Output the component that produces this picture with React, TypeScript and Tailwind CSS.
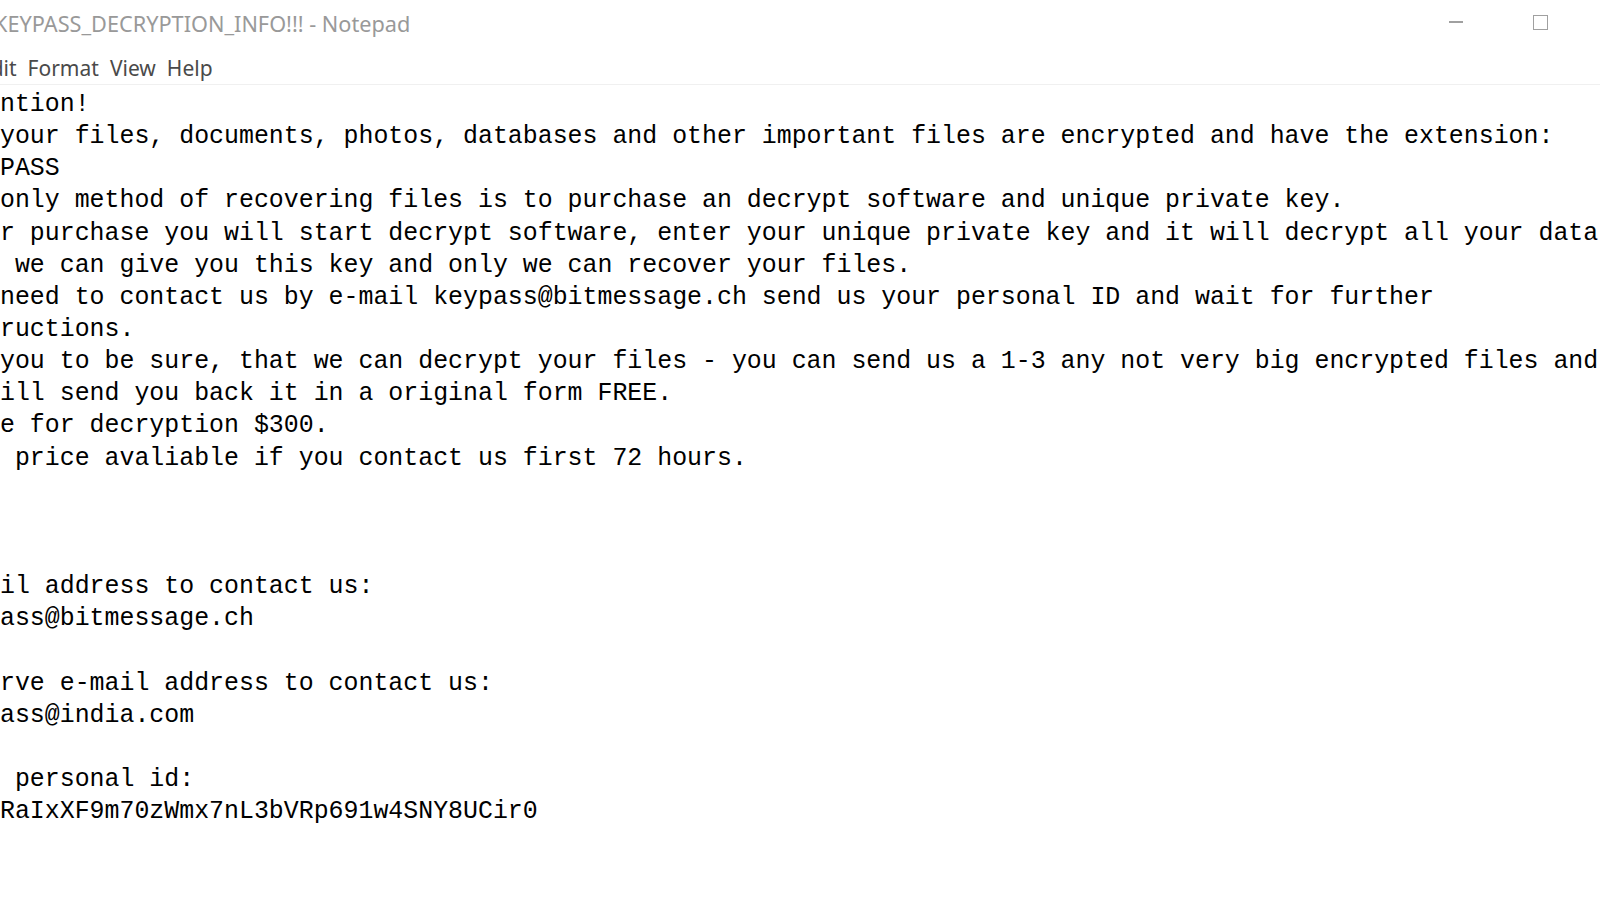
const lines: string[] = [
  "ntion!",
  "your files, documents, photos, databases and other important files are encrypted and have the extension:",
  "PASS",
  "only method of recovering files is to purchase an decrypt software and unique private key.",
  "r purchase you will start decrypt software, enter your unique private key and it will decrypt all your data",
  " we can give you this key and only we can recover your files.",
  "need to contact us by e-mail keypass@bitmessage.ch send us your personal ID and wait for further",
  "ructions.",
  "you to be sure, that we can decrypt your files - you can send us a 1-3 any not very big encrypted files and",
  "ill send you back it in a original form FREE.",
  "e for decryption $300.",
  " price avaliable if you contact us first 72 hours.",
  "",
  "",
  "",
  "il address to contact us:",
  "ass@bitmessage.ch",
  "",
  "rve e-mail address to contact us:",
  "ass@india.com",
  "",
  " personal id:",
  "RaIxXF9m70zWmx7nL3bVRp691w4SNY8UCir0",
];

const menuItems = ["Edit", "Format", "View", "Help"];

export default function App() {
  return (
    <div className="w-[1600px] h-[900px] overflow-hidden bg-white font-['Noto_Sans',sans-serif]">
      {/* Title bar */}
      <div className="h-[46px] pt-[3px] flex items-center">
        <span className="-ml-[6px] text-[21.7px] text-[#999999] whitespace-nowrap">
          KEYPASS_DECRYPTION_INFO!!! - Notepad
        </span>
        <div className="ml-auto flex items-center h-full pr-[17px] -mt-[3px]">
          <div className="w-[85px] h-full flex items-center justify-center">
            <div className="w-[14px] h-[2px] bg-[#a0a0a0] mt-[-2px]" />
          </div>
          <div className="w-[85px] h-full flex items-center justify-center">
            <div className="w-[15px] h-[15px] border-[1.5px] border-[#a0a0a0] mt-[-2px]" />
          </div>
        </div>
      </div>

      {/* Menu bar */}
      <div className="h-[39px] pt-[7px] flex items-center border-b border-[#f0f0f0] text-[21px] text-[#4a4a4a]">
        <div className="-ml-[21px] flex items-center gap-[11px]">
          {menuItems.map((item) => (
            <span key={item} className="whitespace-nowrap">
              {item}
            </span>
          ))}
        </div>
      </div>

      {/* Text area */}
      <div className="pt-[3px] font-['Liberation_Mono',monospace] text-[24.9px] leading-[32.15px] text-black whitespace-pre">
        {lines.map((line, i) => (
          <div key={i} className="h-[32.15px]">
            {line}
          </div>
        ))}
      </div>
    </div>
  );
}
